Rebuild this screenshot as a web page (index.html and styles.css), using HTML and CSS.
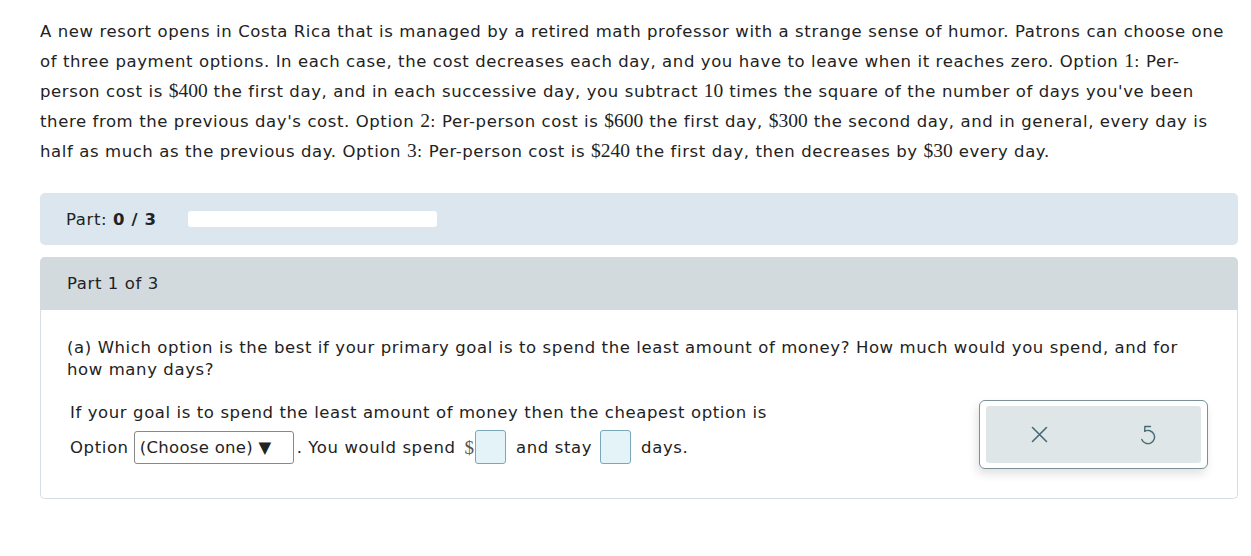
FILE: index.html
```html
<!DOCTYPE html>
<html>
<head>
<meta charset="utf-8">
<link rel="stylesheet" href="styles.css">
</head>
<body>
<div class="page">
  <p class="problem">A new resort opens in Costa Rica that is managed by a retired math professor with a strange sense of humor. Patrons can choose one of three payment options. In each case, the cost decreases each day, and you have to leave when it reaches zero. Option <span class="m">1</span>: Per-person cost is <span class="m">$400</span> the first day, and in each successive day, you subtract <span class="m">10</span> times the square of the number of days you've been there from the previous day's cost. Option <span class="m">2</span>: Per-person cost is <span class="m">$600</span> the first day, <span class="m">$300</span> the second day, and in general, every day is half as much as the previous day. Option <span class="m">3</span>: Per-person cost is <span class="m">$240</span> the first day, then decreases by <span class="m">$30</span> every day.</p>

  <div class="progress">
    <span class="plabel">Part: <b>0 / 3</b></span>
    <span class="pbar"></span>
  </div>

  <div class="part">
    <div class="part-head">Part 1 of 3</div>
    <div class="part-body">
      <p class="question">(a) Which option is the best if your primary goal is to spend the least amount of money? How much would you spend, and for how many days?</p>
      <div class="answer-row">
        <div class="answer">
          <div class="aline">If your goal is to spend the least amount of money then the cheapest option is</div>
          <div class="aline2">Option <span class="select">(Choose one) &#9660;</span>. You would spend <span class="m dollar">$</span><span class="box"></span> and stay <span class="box box2"></span> days.</div>
        </div>
        <div class="tools">
          <div class="tools-inner">
            <svg class="ic" width="17" height="17" viewBox="0 0 17 17"><path d="M1.5 1.5 L15.5 15.5 M15.5 1.5 L1.5 15.5" stroke="#466a74" stroke-width="1.6" fill="none" stroke-linecap="round"/></svg>
            <svg class="ic" width="18" height="21" viewBox="0 0 18 21"><path d="M11.5 2.5 H5.8 V7.2" stroke="#466a74" stroke-width="1.4" fill="none" stroke-linecap="round" stroke-linejoin="round"/><path d="M5.8 7.2 A6.6 6.6 0 1 1 2.8 15.4" stroke="#466a74" stroke-width="1.4" fill="none" stroke-linecap="round"/></svg>
          </div>
        </div>
      </div>
    </div>
  </div>
</div>
</body>
</html>
```
FILE: styles.css
```css
html, body { margin: 0; padding: 0; background: #fff; }
body { font-family: "DejaVu Sans", Verdana, sans-serif; color: #222; font-size: 16.5px; letter-spacing: 0.6px; }
.page { padding: 17px 13px 0 40px; }
.problem { margin: 0; line-height: 30px; }
.m { font-family: "Liberation Serif", "Times New Roman", serif; font-size: 19.5px; line-height: 1; letter-spacing: 0; }
.progress {
  margin-top: 26px;
  height: 52px;
  background: #dbe6ef;
  border-radius: 5px;
  display: flex; align-items: center;
  padding-left: 26px;
}
.plabel b { font-weight: bold; }
.pbar { width: 249px; height: 16px; background: #fff; border-radius: 3px; margin-left: 32px; }
.part { margin-top: 12px; }
.part-head {
  height: 53px; background: #d2dadd; border-radius: 5px 5px 0 0;
  display: flex; align-items: center; padding-left: 27px;
}
.part-body {
  border: 1px solid #d6dee2; border-top: none; border-radius: 0 0 5px 5px;
  padding: 27px 0 28px 26px; height: 133px;
}
.question { margin: 0; line-height: 22px; padding-right: 40px; }
.answer-row { display: flex; margin-top: 20px; padding-left: 3px; }
.answer { flex: 1; }
.aline { line-height: 24px; }
.aline2 { display: flex; align-items: center; margin-top: 4px; height: 36px; }
.select {
  display: inline-block; border: 1px solid #888; border-radius: 3px; height: 33px; line-height: 31px;
  width: 160px; padding: 0 0 0 5px; margin: 0 3px 0 5px; box-sizing: border-box; white-space: nowrap; letter-spacing: 0.3px;
}
.dollar { margin-left: 9px; font-size: 19px; color: #555; }
.box { display: inline-block; width: 31px; height: 34px; box-sizing: border-box; border: 1.5px solid #7aa8b8; background: #e4f3f7; border-radius: 3px; margin: 0 10px 0 1px; }
.box2 { margin: 0 10px 0 8px; }
.tools {
  width: 229px; height: 69px; box-sizing: border-box; margin: -1px 29px 0 0;
  border: 1px solid #7a9199; border-radius: 6px; background: #fff; padding: 5px 6px;
  box-shadow: -2px 5px 10px rgba(0,0,0,0.12);
}
.tools-inner {
  background: #dfe6e8; border-radius: 3px; height: 100%;
  display: flex; align-items: center; justify-content: space-between; padding: 0 44px 0 45px;
}
.ic { display: block; }
```
